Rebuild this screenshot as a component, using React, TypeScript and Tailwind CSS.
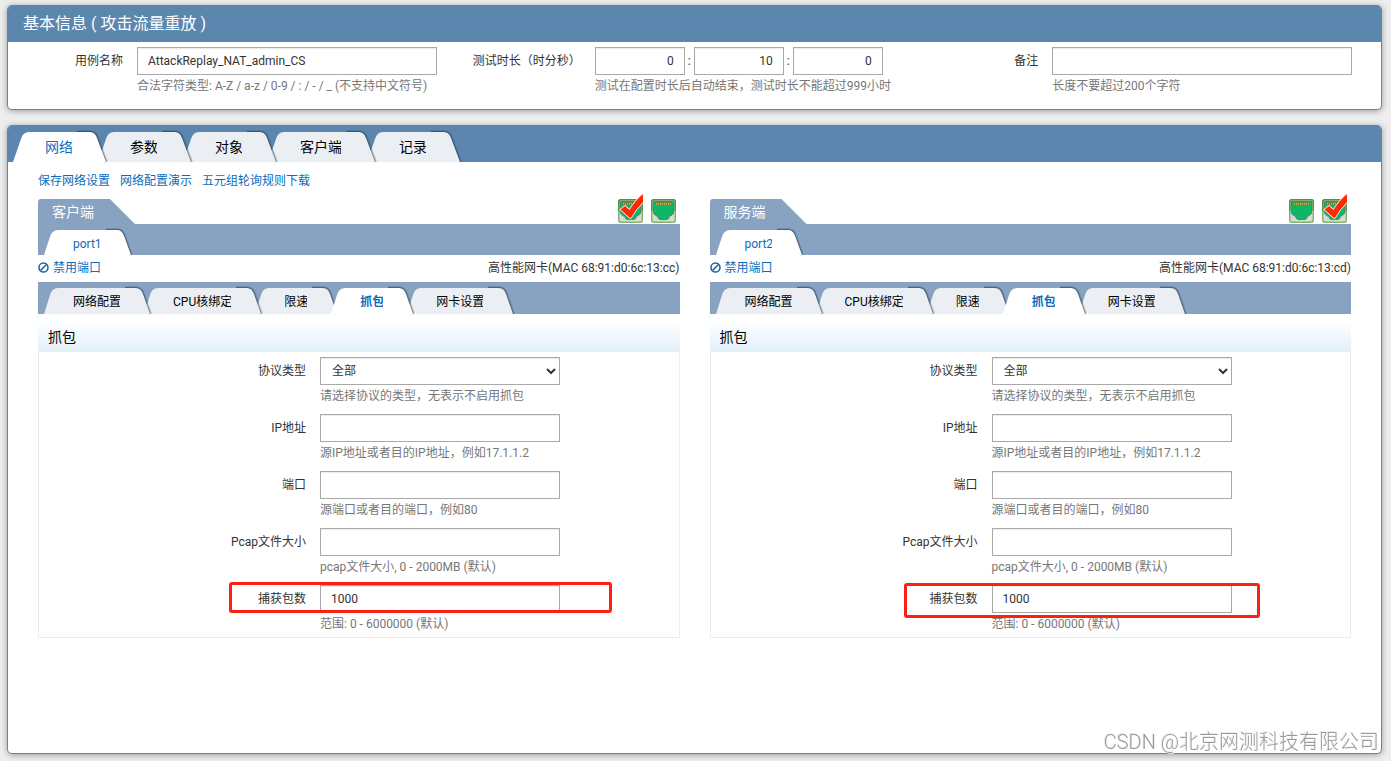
import { useId, useState } from "react";
import type { ReactNode } from "react";
import clsx from "clsx";

type Size = "lg" | "sm";

const shapes = {
  lg: {
    leftBox: "0 0 32 30",
    rightBox: "0 0 34 30",
    left: "M0 30L8 7Q10 0 16 0H33V30Z",
    right: "M-1 0H17Q22 0 24 6L33 30H-1Z",
    edge: "M4 0H17Q22 0 24 6L33 30",
  },
  sm: {
    leftBox: "0 0 29 26",
    rightBox: "0 0 31 26",
    left: "M0 26L6 7Q8 0 14 0H30V26Z",
    right: "M-1 0H15Q20 0 22 6L29 26H-1Z",
    edge: "M4 0H15Q20 0 22 6L29 26",
  },
};

function Tab({
  label,
  size,
  active,
  bold,
  order,
  onClick,
}: {
  label: string;
  size: Size;
  active: boolean;
  bold?: boolean;
  order: number;
  onClick: () => void;
}) {
  const shape = shapes[size];
  const fill = active ? "fill-white" : "fill-[#ebeff4]";
  return (
    <button
      type="button"
      role="tab"
      aria-selected={active}
      onClick={onClick}
      style={{ zIndex: active ? 20 : order }}
      className={clsx(
        "relative flex h-full items-stretch whitespace-nowrap",
        size === "lg" ? "-mr-[9px] text-sm" : "-mr-2 text-xs",
        active ? "text-[#0a6cbc]" : "text-black",
        active && bold && "font-bold",
      )}
    >
      <svg
        viewBox={shape.leftBox}
        preserveAspectRatio="none"
        className={clsx("h-full", size === "lg" ? "w-8" : "w-[29px]", fill)}
      >
        <path d={shape.left} />
      </svg>
      <span
        className={clsx(
          "flex items-center",
          size === "sm" && "pt-0.5",
          active ? "bg-white" : "bg-[#ebeff4]",
        )}
      >
        {label}
      </span>
      <svg
        viewBox={shape.rightBox}
        preserveAspectRatio="none"
        className={clsx(
          "h-full overflow-visible",
          size === "lg" ? "w-[34px]" : "w-[31px]",
          fill,
        )}
      >
        <path d={shape.edge} fill="none" stroke="#1f3347" strokeWidth="4" strokeOpacity=".2" />
        <path d={shape.edge} fill="none" stroke="#1f3347" strokeWidth="2" strokeOpacity=".45" />
        <path d={shape.right} />
      </svg>
    </button>
  );
}

function Tabs({
  items,
  size,
  initial = 0,
  bold,
}: {
  items: string[];
  size: Size;
  initial?: number;
  bold?: boolean;
}) {
  const [current, setCurrent] = useState(initial);
  return (
    <div role="tablist" className="isolate flex h-full">
      {items.map((item, i) => (
        <Tab
          key={item}
          label={item}
          size={size}
          bold={bold}
          active={i === current}
          order={items.length - i}
          onClick={() => setCurrent(i)}
        />
      ))}
    </div>
  );
}

const control =
  "h-7 border border-[#a9a9a9] bg-white px-[10px] text-xs text-[#333] shadow-[inset_0_1px_1px_rgba(0,0,0,0.08)] outline-none focus:border-[#5b86ae]";

function Help({ children }: { children: ReactNode }) {
  return (
    <p className="mt-px whitespace-nowrap text-xs leading-5 text-[#777]">{children}</p>
  );
}

function PortIcon({ checked }: { checked?: boolean }) {
  return (
    <svg viewBox="0 0 25 24" className="h-6 w-[25px] overflow-visible">
      <rect x=".75" y=".75" width="23.5" height="22.5" rx="2" fill="#d8d9d8" stroke="#7fb865" strokeWidth="1.5" />
      <path d="M.8 12V2.5Q.8 .8 3 .8H22Q24.2 .8 24.2 2.5V12" fill="none" stroke="#4f9148" strokeWidth="1.5" />
      <path d="M2.5 2.5H22.5V14.5L19.5 17H18V19L16 20.5H9L7 19V17H5.5L2.5 14.5Z" fill="#0cb868" stroke="#54866a" />
      <path d="M4.5 3H20.5V6H4.5Z" fill="#5c7a34" />
      <path d="M5 4.8H20" stroke="#cdb24c" strokeWidth="2" strokeDasharray="1.2 .8" />
      {checked && (
        <path
          d="M2.5 10.5L7 7L11.5 11Q17 1.5 25 -5V3Q18 10 12.5 19.5Z"
          fill="#ff2706"
          stroke="#fff"
          strokeWidth="1.4"
          paintOrder="stroke"
        />
      )}
    </svg>
  );
}

function FormRow({
  id,
  label,
  help,
  children,
}: {
  id: string;
  label: string;
  help: string;
  children: ReactNode;
}) {
  return (
    <div className="relative flex">
      <label htmlFor={id} className="w-[281px] shrink-0 pr-[14px] text-right leading-7">
        {label}
      </label>
      <div>
        {children}
        <Help>{help}</Help>
      </div>
    </div>
  );
}

const subTabs = ["网络配置", "CPU核绑定", "限速", "抓包", "网卡设置"];

const textFields = [
  { key: "ip", label: "IP地址", help: "源IP地址或者目的IP地址，例如17.1.1.2" },
  { key: "port", label: "端口", help: "源端口或者目的端口，例如80" },
  { key: "size", label: "Pcap文件大小", help: "pcap文件大小, 0 - 2000MB (默认)" },
];

function SidePanel({
  title,
  port,
  mac,
  selected,
  highlight,
}: {
  title: string;
  port: string;
  mac: string;
  selected: number;
  highlight: string;
}) {
  const id = useId();
  return (
    <section className="min-w-0">
      <div className="flex h-[25px] items-start justify-between">
        <h2 className="h-full w-[97px] rounded-tl-[3px] bg-[#87a3c1] pl-[14px] text-sm leading-[26px] text-white [clip-path:polygon(0_0,72px_0,97px_100%,0_100%)]">
          {title}
        </h2>
        <div className="mr-1 flex gap-2">
          <PortIcon checked={selected === 0} />
          <PortIcon checked={selected === 1} />
        </div>
      </div>
      <div className="h-[31px] bg-[#87a3c1] pl-[6px] pt-[6px]">
        <Tabs items={[port]} size="sm" />
      </div>
      <div className="flex h-[27px] items-center justify-between pb-0.5">
        <a href="#" className="flex items-center gap-1 text-[#0a6cbc]">
          <svg viewBox="0 0 11 11" className="size-[11px]" fill="none" stroke="#1f65b5" strokeWidth="1.6">
            <circle cx="5.5" cy="5.5" r="4.5" />
            <path d="M2.3 8.7L8.7 2.3" />
          </svg>
          禁用端口
        </a>
        <span>高性能网卡(MAC {mac})</span>
      </div>
      <div className="h-8 bg-[#87a3c1] pl-[6px] pt-[6px]">
        <Tabs items={subTabs} size="sm" initial={3} bold />
      </div>

      <h3 className="mt-[10px] h-7 bg-linear-to-b from-[#fbfdff] to-[#e2f0f9] pl-[10px] text-sm leading-[26px] text-black">
        抓包
      </h3>
      <form className="space-y-2 border border-t-0 border-[#e3eff7] pb-[3px] pt-[5px]">
        <FormRow id={`${id}-type`} label="协议类型" help="请选择协议的类型，无表示不启用抓包">
          <select id={`${id}-type`} className={clsx(control, "block w-60 pl-[7px]! pr-[6px]!")}>
            <option>全部</option>
          </select>
        </FormRow>
        {textFields.map((field) => (
          <FormRow key={field.key} id={`${id}-${field.key}`} label={field.label} help={field.help}>
            <input id={`${id}-${field.key}`} type="text" className={clsx(control, "block w-60")} />
          </FormRow>
        ))}
        <div className="relative">
          <FormRow id={`${id}-count`} label="捕获包数" help="范围: 0 - 6000000 (默认)">
            <input
              id={`${id}-count`}
              type="text"
              defaultValue="1000"
              className={clsx(control, "block w-60")}
            />
          </FormRow>
          <div
            className={clsx(
              "pointer-events-none absolute rounded-[3px] border-3 border-[#fb2013]",
              highlight,
            )}
          />
        </div>
      </form>
    </section>
  );
}

const card =
  "ml-[7px] mr-[9px] overflow-hidden rounded-[5px] border border-t-0 border-[#5c86ae] bg-white shadow-[0_1px_6px_rgba(0,0,0,0.35)]";

const duration = [
  { label: "时", value: "0" },
  { label: "分", value: "10" },
  { label: "秒", value: "0" },
];

function BasicInfo() {
  const labelClass = "w-[129px] shrink-0 whitespace-nowrap pr-[14px] text-right leading-7";
  return (
    <section className={card}>
      <h1 className="h-[37px] bg-[#5c86ae] pl-[15px] text-base leading-[37px] text-white">
        基本信息 ( 攻击流量重放 )
      </h1>
      <form className="grid grid-cols-3 pb-[13px] pt-[5px]">
        <div className="flex">
          <label htmlFor="case-name" className={labelClass}>
            用例名称
          </label>
          <div>
            <input
              id="case-name"
              type="text"
              defaultValue="AttackReplay_NAT_admin_CS"
              className={clsx(control, "block w-[300px]")}
            />
            <Help>合法字符类型: A-Z / a-z / 0-9 / : / - / _ (不支持中文符号)</Help>
          </div>
        </div>
        <div className="flex">
          <label htmlFor="duration-0" className={labelClass}>
            测试时长（时分秒）
          </label>
          <div>
            <div className="flex">
              {duration.map((part, i) => (
                <div key={part.label} className="flex">
                  {i > 0 && <span className="w-[9px] text-center leading-7">:</span>}
                  <input
                    id={`duration-${i}`}
                    type="text"
                    aria-label={part.label}
                    defaultValue={part.value}
                    className={clsx(control, "w-[90px] text-right")}
                  />
                </div>
              ))}
            </div>
            <Help>测试在配置时长后自动结束，测试时长不能超过999小时</Help>
          </div>
        </div>
        <div className="flex">
          <label htmlFor="remark" className={labelClass}>
            备注
          </label>
          <div>
            <input id="remark" type="text" className={clsx(control, "block w-[300px]")} />
            <Help>长度不要超过200个字符</Help>
          </div>
        </div>
      </form>
    </section>
  );
}

export default function App() {
  return (
    <main className="min-h-screen bg-[#eee] pb-[7px] pt-[5px] font-['Roboto','Noto_Sans_CJK_SC',sans-serif] text-xs text-[#333]">
      <BasicInfo />

      <section className={clsx(card, "mt-[15px] min-h-[calc(100vh-132px)]")}>
        <div className="h-[37px] bg-[#5c86ae] pl-[5px] pt-[7px]">
          <Tabs items={["网络", "参数", "对象", "客户端", "记录"]} size="lg" />
        </div>
        <div className="px-[30px]">
          <nav className="flex h-[37px] items-center gap-[10px] text-[#0a6cbc]">
            <a href="#">保存网络设置</a>
            <a href="#">网络配置演示</a>
            <a href="#">五元组轮询规则下载</a>
          </nav>
          <div className="grid grid-cols-2 gap-[30px]">
            <SidePanel
              title="客户端"
              port="port1"
              mac="68:91:d0:6c:13:cc"
              selected={0}
              highlight="left-[190px] -top-[3px] h-[31px] w-[383px]"
            />
            <SidePanel
              title="服务端"
              port="port2"
              mac="68:91:d0:6c:13:cd"
              selected={1}
              highlight="left-[193px] -top-[2px] h-[35px] w-[356px]"
            />
          </div>
        </div>
      </section>

      <div className="pointer-events-none fixed bottom-1 right-3 text-xl font-light leading-[30px] text-[#999] [text-shadow:1px_1px_1px_#fff,-1px_-1px_0_#ececec]">
        CSDN @北京网测科技有限公司
      </div>
    </main>
  );
}
